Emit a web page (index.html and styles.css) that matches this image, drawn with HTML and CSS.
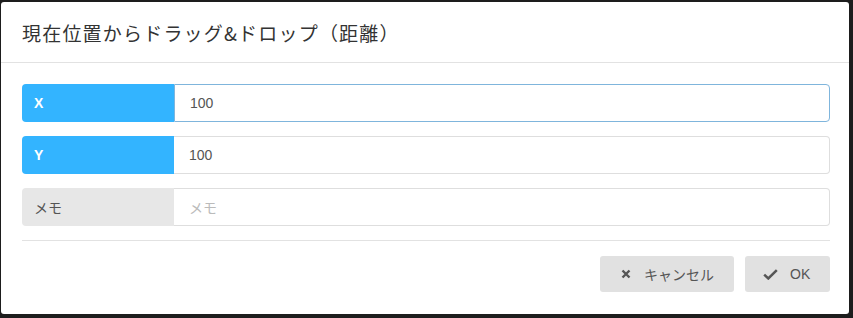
FILE: index.html
```html
<!DOCTYPE html>
<html lang="ja">
<head>
<meta charset="utf-8">
<link rel="stylesheet" href="styles.css">
</head>
<body>
<div class="modal">
  <div class="modal-header">
    <h4 class="modal-title">現在位置からドラッグ&amp;ドロップ（距離）</h4>
  </div>
  <div class="modal-body">
    <div class="field">
      <span class="label label-primary">X</span>
      <div class="input focused">100</div>
    </div>
    <div class="field">
      <span class="label label-primary">Y</span>
      <div class="input">100</div>
    </div>
    <div class="field">
      <span class="label label-default">メモ</span>
      <div class="input placeholder">メモ</div>
    </div>
  </div>
  <div class="modal-footer">
    <button class="btn btn-cancel">
      <svg class="icon" viewBox="0 0 10 10" width="10" height="10"><path d="M1.5 1.5 L8.5 8.5 M8.5 1.5 L1.5 8.5" stroke="#555" stroke-width="2.4" stroke-linecap="butt"/></svg>
      <span class="btn-text-ja">キャンセル</span>
    </button>
    <button class="btn btn-ok">
      <svg class="icon" viewBox="0 0 15 11" width="15" height="11"><path d="M1.2 5.6 L5.3 9.5 L13.8 1.2" fill="none" stroke="#555" stroke-width="2.5"/></svg>
      <span>OK</span>
    </button>
  </div>
</div>
</body>
</html>
```
FILE: styles.css
```css
html, body {
  margin: 0;
  padding: 0;
  background: #1d1d1d;
}
body {
  font-family: "Liberation Sans", "Noto Sans CJK JP", sans-serif;
  color: #555;
  padding: 2px 0 0 1px;
}
.modal {
  width: 848px;
  height: 312px;
  box-sizing: border-box;
  background: #fff;
  border-radius: 3px;
  display: flex;
  flex-direction: column;
}
.modal-header {
  height: 61px;
  box-sizing: border-box;
  border-bottom: 1px solid #e2e2e2;
  padding: 0 21px;
  display: flex;
  align-items: center;
}
.modal-title {
  margin: 0;
  font-size: 19px;
  letter-spacing: 1.2px;
  font-weight: normal;
  color: #333;
  font-family: "Noto Sans CJK JP", sans-serif;
}
.modal-body {
  margin: 0 19px 0 21px;
  padding: 21px 0 14px;
  border-bottom: 1px solid #e2e2e2;
  display: flex;
  flex-direction: column;
  gap: 14px;
}
.field {
  display: flex;
  height: 38px;
}
.label {
  width: 152px;
  flex: none;
  box-sizing: border-box;
  padding-left: 12px;
  display: flex;
  align-items: center;
  font-size: 14px;
  border-radius: 4px 0 0 4px;
}
.label-primary {
  background: #33b4ff;
  color: #fff;
  font-weight: bold;
}
.label-default {
  background: #e7e7e7;
  color: #555;
  font-family: "Noto Sans CJK JP", sans-serif;
}
.input {
  flex: 1;
  box-sizing: border-box;
  border: 1px solid #dedede;
  border-left: none;
  border-radius: 0 4px 4px 0;
  padding-left: 15px;
  display: flex;
  align-items: center;
  font-size: 14px;
  color: #555;
}
.input.focused {
  border: 1px solid #7fb5dc;
}
.input.placeholder {
  color: #bbb;
  font-family: "Noto Sans CJK JP", sans-serif;
}
.modal-footer {
  display: flex;
  justify-content: flex-end;
  gap: 11px;
  padding: 15px 19px 0 0;
}
.btn {
  height: 36px;
  border: none;
  border-radius: 3px;
  background: #e1e1e1;
  color: #555;
  font-family: "Liberation Sans", "Noto Sans CJK JP", sans-serif;
  font-size: 14px;
  padding: 0 0 0 20px;
  display: flex;
  align-items: center;
}
.btn-cancel {
  width: 134px;
  padding-left: 21px;
  gap: 13px;
}
.btn-ok {
  width: 85px;
  padding-left: 18px;
  gap: 12px;
}
.btn-text-ja {
  font-family: "Noto Sans CJK JP", sans-serif;
}
.icon {
  display: block;
}
```
